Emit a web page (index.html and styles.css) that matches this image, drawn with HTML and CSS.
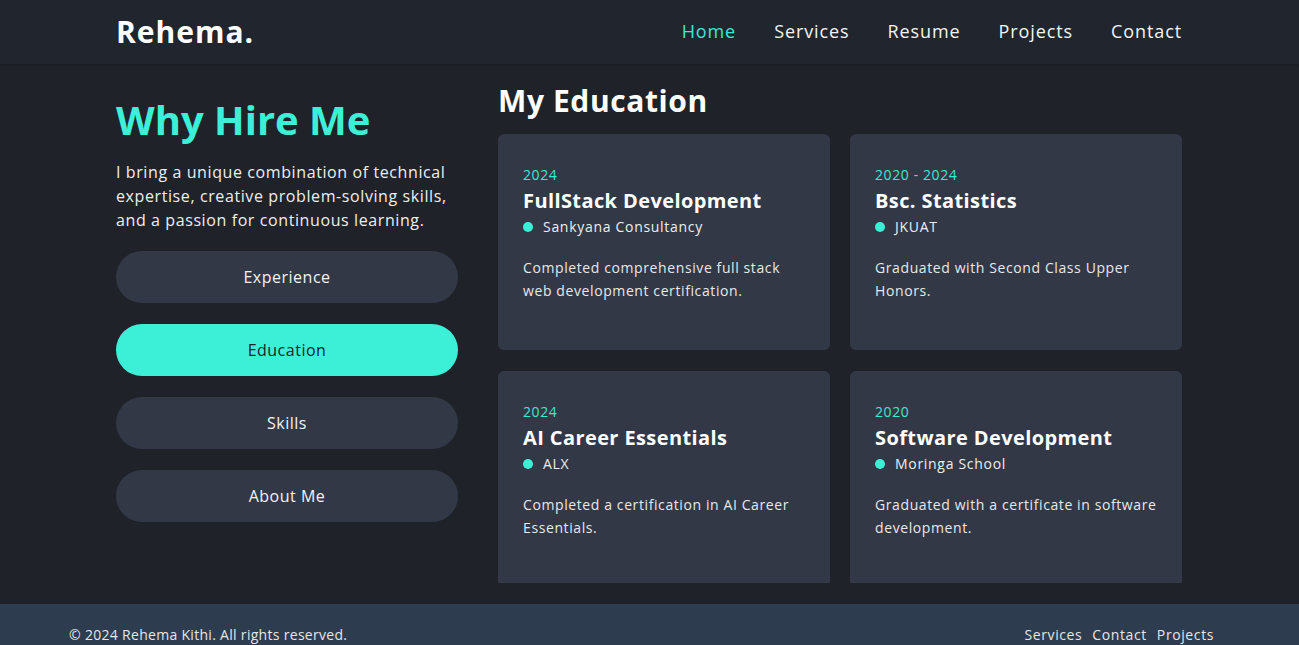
FILE: index.html
```html
<!DOCTYPE html>
<html lang="en">
<head>
<meta charset="utf-8">
<title>Rehema - Resume</title>
<link rel="stylesheet" href="styles.css">
</head>
<body>
<header class="site-header">
  <div class="container header-inner">
    <a class="logo" href="#">Rehema.</a>
    <nav class="nav">
      <a class="nav-link active" href="#">Home</a>
      <a class="nav-link" href="#">Services</a>
      <a class="nav-link" href="#">Resume</a>
      <a class="nav-link" href="#">Projects</a>
      <a class="nav-link" href="#">Contact</a>
    </nav>
  </div>
</header>

<main class="container resume">
  <aside class="side">
    <h1 class="side-title">Why Hire Me</h1>
    <p class="side-text">I bring a unique combination of technical expertise, creative problem-solving skills, and a passion for continuous learning.</p>
    <div class="tabs">
      <button class="tab">Experience</button>
      <button class="tab tab-active">Education</button>
      <button class="tab">Skills</button>
      <button class="tab">About Me</button>
    </div>
  </aside>

  <section class="content">
    <h2 class="content-title">My Education</h2>
    <div class="cards-scroll">
      <div class="cards">
        <article class="card">
          <div class="card-year">2024</div>
          <h3 class="card-title">FullStack Development</h3>
          <div class="card-place"><span class="dot"></span>Sankyana Consultancy</div>
          <p class="card-desc">Completed comprehensive full stack web development certification.</p>
        </article>
        <article class="card">
          <div class="card-year">2020 - 2024</div>
          <h3 class="card-title">Bsc. Statistics</h3>
          <div class="card-place"><span class="dot"></span>JKUAT</div>
          <p class="card-desc">Graduated with Second Class Upper Honors.</p>
        </article>
        <article class="card">
          <div class="card-year">2024</div>
          <h3 class="card-title">AI Career Essentials</h3>
          <div class="card-place"><span class="dot"></span>ALX</div>
          <p class="card-desc">Completed a certification in AI Career Essentials.</p>
        </article>
        <article class="card">
          <div class="card-year">2020</div>
          <h3 class="card-title">Software Development</h3>
          <div class="card-place"><span class="dot"></span>Moringa School</div>
          <p class="card-desc">Graduated with a certificate in software development.</p>
        </article>
      </div>
    </div>
  </section>
</main>

<footer class="site-footer">
  <div class="footer-inner">
    <p class="copyright">© 2024 Rehema Kithi. All rights reserved.</p>
    <nav class="footer-nav">
      <a href="#">Services</a>
      <a href="#">Contact</a>
      <a href="#">Projects</a>
    </nav>
  </div>
</footer>
</body>
</html>
```

FILE: styles.css
```css
* {
  box-sizing: border-box;
}

html, body {
  margin: 0;
  padding: 0;
}

body {
  background: #1f2229;
  color: #f2f2f2;
  font-family: "Open Sans", "Noto Sans", sans-serif;
  overflow: hidden;
}

a {
  color: inherit;
  text-decoration: none;
}

.container {
  width: 1067px;
  padding-right: 1px;
  margin: 0 auto;
}

/* Header */
.site-header {
  background: #21252d;
  height: 64px;
  box-shadow: 0 1px 2px rgba(0, 0, 0, 0.25);
  position: relative;
  z-index: 1;
}

.header-inner {
  height: 64px;
  display: flex;
  align-items: center;
  justify-content: space-between;
  padding-bottom: 2px;
}

.logo {
  font-size: 30px;
  font-weight: 700;
  color: #ffffff;
  letter-spacing: 1px;
}

.nav {
  display: flex;
  gap: 38px;
}

.nav-link {
  font-size: 18px;
  font-weight: 500;
  letter-spacing: 0.9px;
  color: #f4f4f4;
}

.nav-link.active {
  color: #3ce8d2;
}

/* Main */
.resume {
  display: flex;
  gap: 40px;
  padding: 19px 1px 21px 0;
}

.side {
  width: 342px;
  flex-shrink: 0;
}

.side-title {
  margin: 12px 0 15px;
  font-size: 40px;
  line-height: 50px;
  font-weight: 700;
  color: #3cf0d8;
}

.side-text {
  margin: 0 0 19px;
  font-size: 16px;
  line-height: 24px;
  letter-spacing: 0.6px;
  color: #eeeeee;
}

.tabs {
  display: flex;
  flex-direction: column;
  gap: 21px;
}

.tab {
  height: 52px;
  border: none;
  border-radius: 26px;
  background: #323846;
  color: #f2f2f2;
  font-family: inherit;
  font-size: 16px;
  font-weight: 500;
  letter-spacing: 0.5px;
  cursor: pointer;
}

.tab-active {
  background: #3cf0d8;
  color: #1f2229;
}

.content {
  flex: 1;
}

.content-title {
  margin: 0 0 15px;
  font-size: 30px;
  line-height: 36px;
  font-weight: 700;
  letter-spacing: 0.6px;
  color: #ffffff;
}

.cards-scroll {
  height: 449px;
  overflow: hidden;
}

.cards {
  display: grid;
  grid-template-columns: 1fr 1fr;
  column-gap: 20px;
  row-gap: 21px;
}

.card {
  background: #323846;
  border-radius: 6px;
  min-height: 216px;
  padding: 30px 25px;
}

.card-year {
  font-size: 14px;
  line-height: 21px;
  letter-spacing: 0.6px;
  color: #3ce8d2;
}

.card-title {
  margin: 2px 0 0;
  font-size: 20px;
  line-height: 28px;
  font-weight: 700;
  letter-spacing: 0.4px;
  color: #ffffff;
}

.card-place {
  display: flex;
  align-items: center;
  gap: 10px;
  font-size: 14px;
  line-height: 24px;
  letter-spacing: 0.7px;
  color: #eeeeee;
}

.dot {
  width: 10px;
  height: 10px;
  border-radius: 50%;
  background: #3cf0d8;
}

.card-desc {
  margin: 17px 0 0;
  font-size: 14px;
  line-height: 23px;
  letter-spacing: 0.6px;
  color: #e8e8e8;
}

/* Footer */
.site-footer {
  background: #2d3c4f;
  height: 80px;
}

.footer-inner {
  display: flex;
  justify-content: space-between;
  padding: 20px 85px 0 69px;
}

.copyright {
  margin: 0;
  font-size: 14px;
  line-height: 21px;
  letter-spacing: 0.3px;
  color: #e6e6e6;
}

.footer-nav {
  display: flex;
  gap: 10px;
  font-size: 14px;
  line-height: 21px;
  letter-spacing: 0.6px;
  color: #e6e6e6;
}
```
